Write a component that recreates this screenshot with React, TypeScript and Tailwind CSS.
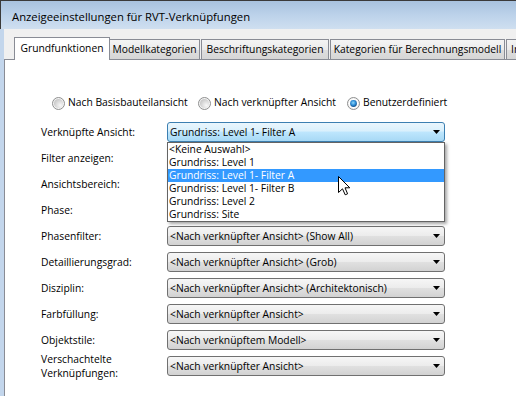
import React from "react";

function Arrow() {
  return (
    <svg width="7" height="4" viewBox="0 0 7 4" className="shrink-0">
      <path d="M0 0H7L3.5 4Z" fill="#000" />
    </svg>
  );
}

function Combo({ text, active = false }: { text: string; active?: boolean }) {
  return (
    <div
      className={
        active
          ? "h-[20px] w-[278px] shrink-0 rounded-[3px] border border-[#3c7fb1] bg-[linear-gradient(to_bottom,#eaf6fd_0%,#d9f0fc_45%,#bee6fd_50%,#a7d9f5_100%)] flex items-center pl-[2px] pr-[4px]"
          : "h-[20px] w-[278px] shrink-0 rounded-[3px] border border-[#707070] bg-[linear-gradient(to_bottom,#f6f6f6_0%,#ececec_48%,#e0e0e0_52%,#d2d2d2_100%)] flex items-center pl-[2px] pr-[4px]"
      }
    >
      <span className="flex-1 whitespace-nowrap overflow-hidden leading-[14px]">{text}</span>
      <Arrow />
    </div>
  );
}

function Radio({ checked = false, id }: { checked?: boolean; id: string }) {
  return (
    <svg width="13" height="13" viewBox="0 0 13 13" className="shrink-0">
      <defs>
        <radialGradient id={`g${id}`} cx="0.7" cy="0.7" r="0.8">
          <stop offset="0" stopColor="#f8f8f8" />
          <stop offset="1" stopColor="#c4c4c4" />
        </radialGradient>
        <radialGradient id={`b${id}`} cx="0.45" cy="0.4" r="0.65">
          <stop offset="0" stopColor="#8fd8fa" />
          <stop offset="0.55" stopColor="#2b8bd6" />
          <stop offset="1" stopColor="#0e4377" />
        </radialGradient>
      </defs>
      <circle cx="6.5" cy="6.5" r="6" fill="#f4f4f4" stroke="#8e8f8f" />
      <circle cx="6.5" cy="6.5" r="4.6" fill={checked ? "#ffffff" : `url(#g${id})`} />
      {checked && <circle cx="6.5" cy="6.5" r="3.4" fill={`url(#b${id})`} />}
    </svg>
  );
}

type Row = { label: string[]; combo?: string; active?: boolean };

const rows: Row[] = [
  { label: ["Verknüpfte Ansicht:"], combo: "Grundriss: Level 1- Filter A", active: true },
  { label: ["Filter anzeigen:"] },
  { label: ["Ansichtsbereich:"] },
  { label: ["Phase:"] },
  { label: ["Phasenfilter:"], combo: "<Nach verknüpfter Ansicht> (Show All)" },
  { label: ["Detaillierungsgrad:"], combo: "<Nach verknüpfter Ansicht> (Grob)" },
  { label: ["Disziplin:"], combo: "<Nach verknüpfter Ansicht> (Architektonisch)" },
  { label: ["Farbfüllung:"], combo: "<Nach verknüpfter Ansicht>" },
  { label: ["Objektstile:"], combo: "<Nach verknüpftem Modell>" },
  { label: ["Verschachtelte", "Verknüpfungen:"], combo: "<Nach verknüpfter Ansicht>" },
];

const listItems = [
  "<Keine Auswahl>",
  "Grundriss: Level 1",
  "Grundriss: Level 1- Filter A",
  "Grundriss: Level 1- Filter B",
  "Grundriss: Level 2",
  "Grundriss: Site",
];

const tabBg =
  "bg-[linear-gradient(to_bottom,#f4f4f4_0%,#ebebeb_50%,#dedede_52%,#d6d6d6_100%)]";

export default function App() {
  return (
    <div className="relative w-[516px] h-[396px] overflow-hidden bg-[#f0f0f0] font-['Open_Sans',sans-serif] text-[10.3px] text-black">
      {/* Title bar */}
      <div className="h-[29px] border-t border-l border-[#3a3a3a] bg-[linear-gradient(to_bottom,#a8c2de_0%,#bcd2ea_50%,#cfdff0_100%)] flex items-center pl-[11px] pt-[4px] text-[11.3px] whitespace-nowrap">
        Anzeigeeinstellungen für RVT-Verknüpfungen
      </div>
      <div className="flex h-[367px]">
        <div className="w-[4px] shrink-0 bg-[#c3d6ec]" />
        <div className="flex-1 flex flex-col min-w-0">
          {/* Tabs */}
          <div className="h-[30px] flex items-end pl-[10px] whitespace-nowrap relative z-10">
            <div className="h-[23px] w-[96px] shrink-0 -mb-[1px] bg-white border border-b-0 border-[#898c95] flex justify-center pt-[3px]">
              Grundfunktionen
            </div>
            <div className={`h-[20px] w-[90px] shrink-0 border border-b-0 border-l-0 border-[#898c95] ${tabBg} flex justify-center items-center`}>
              Modellkategorien
            </div>
            <div className={`h-[20px] w-[128px] shrink-0 ml-[1px] border border-b-0 border-[#898c95] ${tabBg} flex justify-center items-center`}>
              Beschriftungskategorien
            </div>
            <div className={`h-[20px] w-[175px] shrink-0 ml-[1px] border border-b-0 border-[#898c95] ${tabBg} flex justify-center items-center`}>
              Kategorien für Berechnungsmodell
            </div>
            <div className={`h-[20px] w-[60px] shrink-0 ml-[1px] border border-b-0 border-[#898c95] ${tabBg} flex items-center pl-[4px]`}>
              Info
            </div>
          </div>
          {/* Panel */}
          <div className="flex-1 bg-white border-t border-l border-[#898c95] pl-[36px] pt-[30px] whitespace-nowrap">
            <div className="h-[26px] flex items-center pl-[11px]">
              <div className="w-[146px] flex items-center gap-[3px]">
                <Radio id="r1" />
                <span>Nach Basisbauteilansicht</span>
              </div>
              <div className="w-[149px] flex items-center gap-[3px]">
                <Radio id="r2" />
                <span>Nach verknüpfter Ansicht</span>
              </div>
              <div className="flex items-center gap-[3px]">
                <Radio id="r3" checked />
                <span>Benutzerdefiniert</span>
              </div>
            </div>
            <div className="mt-[3px] flex flex-col">
              {rows.map((r, i) => (
                <div key={i} className="h-[26px] flex items-center">
                  <div className="w-[126px] shrink-0 flex flex-col leading-[14px]">
                    {r.label.map((l, j) => (
                      <span key={j}>{l}</span>
                    ))}
                  </div>
                  {r.combo && <Combo text={r.combo} active={r.active} />}
                </div>
              ))}
            </div>
          </div>
        </div>
      </div>

      {/* Dropdown list popup */}
      <div className="absolute left-[167px] top-[142px] w-[278px] h-[80px] bg-white border border-[#646464] shadow-[2px_2px_3px_rgba(0,0,0,0.35)] whitespace-nowrap">
        {listItems.map((t, i) => (
          <div
            key={i}
            className={
              i === 2
                ? "h-[13px] leading-[13px] pl-[1px] bg-[#3399ff] text-white"
                : "h-[13px] leading-[13px] pl-[1px]"
            }
          >
            {t}
          </div>
        ))}
      </div>

      {/* Mouse cursor */}
      <svg className="absolute left-[338px] top-[176px]" width="13" height="20" viewBox="0 0 13 20">
        <path
          d="M0.5 0.5 L0.5 16.5 L4.5 12.8 L7.2 18.8 L9.6 17.8 L7 11.8 L11.8 11.8 Z"
          fill="#fff"
          stroke="#000"
          strokeWidth="1"
          strokeLinejoin="miter"
        />
      </svg>
    </div>
  );
}
